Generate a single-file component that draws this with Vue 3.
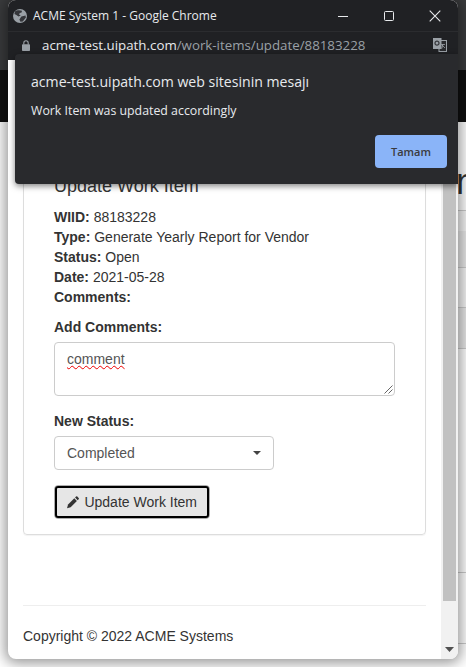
<script setup>
const details = [
  { label: 'WIID:', value: '88183228' },
  { label: 'Type:', value: 'Generate Yearly Report for Vendor' },
  { label: 'Status:', value: 'Open' },
  { label: 'Date:', value: '2021-05-28' },
  { label: 'Comments:', value: '' },
]
</script>

<template>
  <div class="desk">
    <div class="bg-top"></div>
    <div class="bg-nav"></div>
    <div class="bg-page">
      <h1 class="bg-heading">n</h1>
      <div class="bg-row r1"></div>
      <div class="bg-row r2"></div>
      <div class="bg-row r3"></div>
      <div class="bg-row r4"></div>
      <div class="bg-row r5"></div>
      <div class="bg-row r6"></div>
      <div class="bg-row r7"></div>
    </div>

    <div class="window">
      <div class="titlebar">
        <svg class="globe" width="14" height="14" viewBox="0 0 14 14">
          <circle cx="7" cy="7" r="7" fill="#9aa0a6" />
          <path d="M2 2.5 C4 1 7 1.2 9 1.8 L8.6 3.6 L6.8 4 L6 5.6 L7.8 6.6 L5.4 7.4 L3.4 6 L1.4 5 Z" fill="#35363a" />
          <path d="M8.4 7.6 L12.6 6.4 L12.8 8.6 L9.8 12.4 L7.4 12.8 L6.4 10.4 Z" fill="#35363a" />
        </svg>
        <span class="title">ACME System 1 - Google Chrome</span>
        <div class="win-controls">
          <svg width="12" height="12" viewBox="0 0 12 12"><path d="M1 6.5H11" stroke="#e8eaed" stroke-width="1" /></svg>
          <svg width="12" height="12" viewBox="0 0 12 12"><rect x="1.5" y="1.5" width="9" height="9" rx="1" fill="none" stroke="#e8eaed" stroke-width="1" /></svg>
          <svg width="12" height="12" viewBox="0 0 12 12"><path d="M.7.7L11.3 11.3M11.3.7L.7 11.3" stroke="#e8eaed" stroke-width="1.1" /></svg>
        </div>
      </div>

      <div class="addressbar">
        <svg class="lock" width="8" height="11" viewBox="0 0 8 11">
          <path d="M1.8 4.5V3a2.2 2.2 0 0 1 4.4 0v1.5" fill="none" stroke="#9aa0a6" stroke-width="1.1" />
          <rect x="0" y="4.2" width="8" height="6.8" rx=".8" fill="#9aa0a6" />
        </svg>
        <span class="url"><span class="host">acme-test.uipath.com</span>/work-items/update/88183228</span>
        <svg class="translate" width="14" height="14" viewBox="0 0 14 14">
          <rect x="6" y="2.5" width="7.5" height="11" fill="#292a2d" stroke="#9aa0a6" />
          <rect x="0" y="0" width="8.5" height="11" fill="#9aa0a6" />
          <circle cx="4" cy="5.2" r="2" fill="none" stroke="#35363a" stroke-width="1.2" />
          <path d="M8 6.5h4M10 6l-1.2 4.5M9 7l3 3" fill="none" stroke="#9aa0a6" stroke-width=".8" />
        </svg>
      </div>

      <div class="viewport">
        <div class="content">
          <section class="card">
            <h4>Update Work Item</h4>
            <p v-for="item in details" :key="item.label" class="line">
              <strong>{{ item.label }}</strong> {{ item.value }}
            </p>

            <label class="field-label first">Add Comments:</label>
            <div class="textarea">
              <span class="misspelled">comment</span>
              <svg class="grip" width="9" height="9" viewBox="0 0 9 9">
                <path d="M.5 8.5L8.5 .5M4.5 8.5L8.5 4.5" stroke="#666" stroke-width="1" />
              </svg>
            </div>

            <label class="field-label second">New Status:</label>
            <div class="select">
              <span>Completed</span>
              <svg width="8" height="4" viewBox="0 0 8 4"><path d="M0 0H8L4 4Z" fill="#444" /></svg>
            </div>

            <button class="update" type="button">
              <svg width="14" height="14" viewBox="0 0 14 14">
                <path d="M10.2 .9a1 1 0 0 1 1.4 0l1.5 1.5a1 1 0 0 1 0 1.4l-1.1 1.1-2.9-2.9z" fill="#333" />
                <path d="M8.2 2.9l2.9 2.9-7 7L0 14l1.2-4.1z" fill="#333" />
              </svg>
              Update Work Item
            </button>
          </section>

          <footer class="footer">Copyright © 2022 ACME Systems</footer>
        </div>

        <div class="scrollbar">
          <div class="thumb"></div>
          <svg class="arrow" width="9" height="5" viewBox="0 0 9 5"><path d="M0 0H9L4.5 5Z" fill="#505050" /></svg>
        </div>
      </div>

      <div class="dialog">
        <div class="dialog-title">acme-test.uipath.com web sitesinin mesajı</div>
        <div class="dialog-text">Work Item was updated accordingly</div>
        <div class="dialog-actions">
          <button class="ok" type="button">Tamam</button>
        </div>
      </div>
    </div>
  </div>
</template>

<style>
html,
body {
  margin: 0;
  overflow: hidden;
}
</style>

<style scoped>
.desk {
  position: relative;
  width: 466px;
  height: 667px;
  overflow: hidden;
  display: flex;
  flex-direction: column;
  background: #fff;
}

.bg-top {
  height: 70px;
  background: #3a3b3d;
  flex: none;
}

.bg-nav {
  height: 52px;
  background: #101010;
  flex: none;
}

.bg-page {
  flex: 1;
  background: #fff;
}

.bg-heading {
  margin: 40px 0 0 456px;
  height: 48px;
  font: 500 36px/40px 'Liberation Sans', sans-serif;
  color: #333;
  white-space: nowrap;
}

.bg-row {
  border-bottom: 1px solid #ccc;
  margin-left: 450px;
}

.r1 { height: 0; }
.r2 { height: 20px; background: #f5f5f5; border-bottom: 0; }
.r3 { height: 36px; background: #e9e9e9; }
.r4 { height: 39px; background: #f5f5f5; }
.r5 { height: 40px; background: #e9e9e9; }
.r6 { height: 223px; }
.r7 { height: 70px; }

.window {
  position: absolute;
  left: 8px;
  top: 0;
  width: 450px;
  height: 659px;
  border-radius: 8px;
  overflow: hidden;
  background: #fff;
  box-shadow: 0 1px 14px 3px rgba(0, 0, 0, 0.42);
  display: flex;
  flex-direction: column;
  font-family: 'Liberation Sans', sans-serif;
  color: #333;
}

.titlebar {
  height: 31px;
  flex: none;
  background: #202124;
  border-bottom: 1px solid #2b2c2f;
  display: flex;
  align-items: center;
  padding-left: 5px;
}

.title {
  margin-left: 6px;
  font: 12px 'Open Sans', sans-serif;
  color: #e8eaed;
}

.win-controls {
  margin-left: auto;
  display: flex;
  gap: 34px;
  padding-right: 17px;
}

.addressbar {
  height: 28px;
  flex: none;
  background: #202124;
  display: flex;
  align-items: flex-start;
  padding-top: 4px;
  box-sizing: border-box;
}

.lock {
  margin: 4px 0 0 14px;
}

.url {
  margin-left: 12px;
  font: 13.3px/19px 'Open Sans', sans-serif;
  color: #9aa0a6;
}

.host {
  color: #e8eaed;
}

.translate {
  margin: 2px 11px 0 auto;
}

.viewport {
  flex: 1;
  min-height: 0;
  display: flex;
  overflow: hidden;
}

.content {
  flex: 1;
  padding: 100px 15px 0;
  font-size: 14px;
  line-height: 20px;
}

.card {
  border: 1px solid #ddd;
  border-radius: 4px;
  padding: 15px 30px 15px;
  height: 375px;
  box-sizing: border-box;
  box-shadow: 0 1px 1px rgba(0, 0, 0, 0.05);
}

h4 {
  margin: 0 0 11px;
  font-size: 18px;
  font-weight: 500;
  line-height: 20px;
}

.line {
  margin: 0;
}

.field-label {
  display: block;
  font-weight: bold;
}

.first {
  margin-top: 10px;
  margin-bottom: 5px;
}

.second {
  margin-top: 15px;
  margin-bottom: 5px;
}

.textarea {
  position: relative;
  height: 54px;
  width: 341px;
  box-sizing: border-box;
  border: 1px solid #ccc;
  border-radius: 4px;
  padding: 6px 12px;
  color: #555;
}

.misspelled {
  text-decoration: underline wavy #e00;
  text-decoration-thickness: 1px;
  text-underline-offset: 1px;
}

.grip {
  position: absolute;
  right: 1px;
  bottom: 1px;
}

.select {
  width: 220px;
  height: 34px;
  box-sizing: border-box;
  border: 1px solid #ccc;
  border-radius: 4px;
  padding: 6px 12px;
  color: #555;
  display: flex;
  align-items: center;
  justify-content: space-between;
  padding-right: 12px;
}

.update {
  margin-top: 15px;
  height: 34px;
  width: 156px;
  box-sizing: border-box;
  background: #e6e6e6;
  border: 1px solid #adadad;
  border-radius: 4px;
  outline: 2px solid #000;
  outline-offset: -3px;
  font: 14px 'Liberation Sans', sans-serif;
  color: #333;
  display: flex;
  align-items: center;
  gap: 5px;
  padding: 0 12px;
  white-space: nowrap;
}

.footer {
  margin-top: 70px;
  border-top: 1px solid #eee;
  padding-top: 20px;
}

.scrollbar {
  position: relative;
  width: 17px;
  flex: none;
  background: #f1f1f1;
}

.thumb {
  margin-left: 2px;
  width: 13px;
  height: 541px;
  background: #c1c1c1;
}

.arrow {
  position: absolute;
  left: 4px;
  bottom: 7px;
}

.dialog {
  position: absolute;
  left: 7px;
  top: 54px;
  width: 443px;
  height: 130px;
  box-sizing: border-box;
  background: #292a2d;
  border-radius: 4px 0 0 4px;
  box-shadow: 0 2px 6px rgba(0, 0, 0, 0.5);
  padding: 18px 11px 0 16px;
  color: #e8eaed;
  font-family: 'Open Sans', sans-serif;
}

.dialog-title {
  font-size: 14.1px;
  line-height: 20px;
}

.dialog-text {
  margin-top: 10px;
  font-size: 12.35px;
  line-height: 18px;
}

.dialog-actions {
  margin-top: 15px;
  display: flex;
  justify-content: flex-end;
}

.ok {
  width: 72px;
  height: 33px;
  border: 0;
  border-radius: 4px;
  background: #8ab4f8;
  color: #3a3b3e;
  font: 600 11px 'Open Sans', sans-serif;
}
</style>
